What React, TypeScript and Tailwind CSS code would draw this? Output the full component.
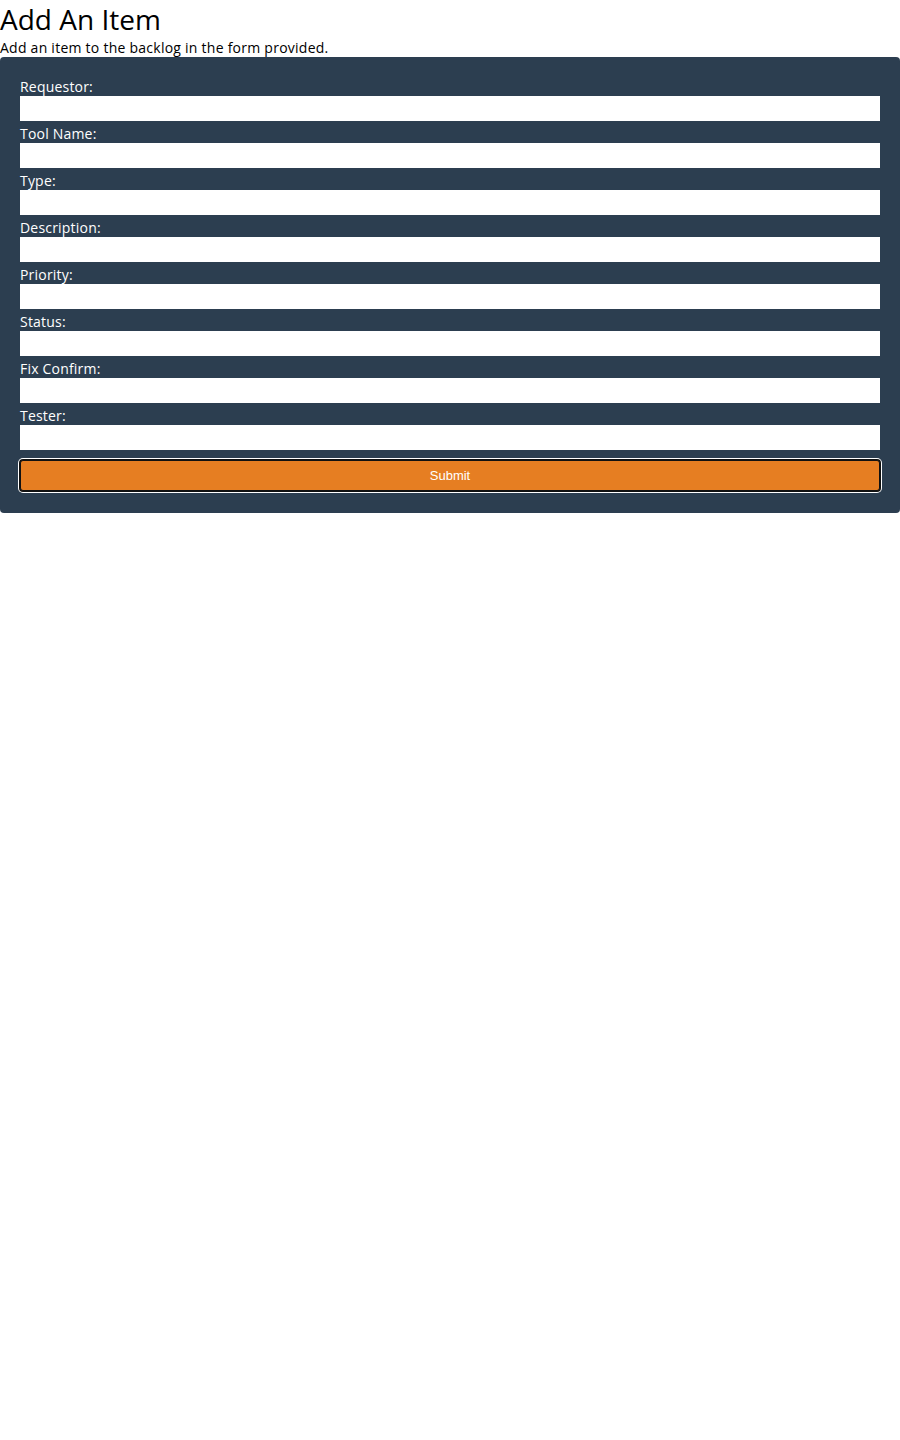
const fields = [
  "Requestor:",
  "Tool Name:",
  "Type:",
  "Description:",
  "Priority:",
  "Status:",
  "Fix Confirm:",
  "Tester:",
];

export default function App() {
  return (
    <div className="min-h-[1440px] w-[900px] bg-white text-black font-['Open_Sans',sans-serif]">
      <h1 className="m-0 text-[28px] leading-[38px] font-normal">Add An Item</h1>
      <p className="text-[14px] leading-[19px] tracking-[0.25px]">Add an item to the backlog in the form provided.</p>

      <form
        className="bg-[#2c3e50] rounded-[4px] px-5 pt-5 pb-[22px]"
        onSubmit={(e) => e.preventDefault()}
      >
        {fields.map((label) => (
          <div key={label}>
            <label className="block text-white text-[14px] leading-[19px] tracking-[0.2px]">{label}</label>
            <input type="text" className="block w-full h-[25px] mb-[3px] bg-white border-0 outline-none" />
          </div>
        ))}
        <button
          type="submit"
          className="mt-[7px] w-full h-[31px] pt-px bg-[#e67e22] text-white text-[13px] font-['Liberation_Sans',Arial,sans-serif] border border-[#111] rounded-[3px] shadow-[0_0_0_1px_#111,0_0_0_2px_#fff]"
        >
          Submit
        </button>
      </form>
    </div>
  );
}
